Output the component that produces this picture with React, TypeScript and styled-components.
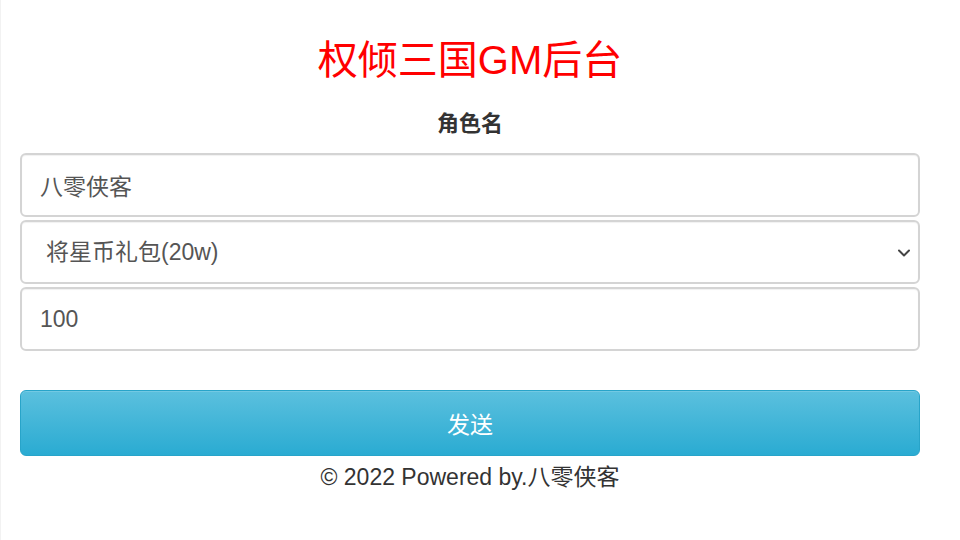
import React, { useState } from "react";
import styled, { createGlobalStyle } from "styled-components";

const GlobalStyle = createGlobalStyle`
    html, body {
        margin: 0;
        padding: 0;
        background: #fff;
    }
    body {
        font-family: "Liberation Sans", "Noto Sans CJK SC", sans-serif;
        color: #333;
        border-left: 1px solid #f2f2f2;
    }
`;

const Page = styled.div`
    display: flex;
    flex-direction: column;
    align-items: stretch;
    padding: 30px 40px 0 19px;
    height: 540px;
    box-sizing: border-box;
`;

const Title = styled.h1`
    margin: 0;
    text-align: center;
    color: #ff0000;
    font-size: 40px;
    font-weight: normal;
    line-height: 60px;
`;

const Label = styled.label`
    display: block;
    text-align: center;
    font-size: 22px;
    font-weight: bold;
    color: #333;
    line-height: 30px;
    margin: 19px 0 14px;
`;

const Fields = styled.div`
    display: flex;
    flex-direction: column;
    gap: 3px;
`;

const fieldCss = `
    display: block;
    width: 100%;
    height: 64px;
    box-sizing: border-box;
    border: 2px solid #d4d4d4;
    border-radius: 6px;
    background: #fff;
    font-family: "Liberation Sans", "Noto Sans CJK SC", sans-serif;
    font-size: 23px;
    color: #555;
    outline: none;
    box-shadow: inset 0 1px 1px rgba(0, 0, 0, 0.06);
`;

const TextInput = styled.input`
    ${fieldCss}
    padding: 0 18px;
`;

const SelectWrap = styled.div`
    position: relative;
`;

const Select = styled.select`
    ${fieldCss}
    padding: 0 40px 0 24px;
    appearance: none;
    -webkit-appearance: none;
`;

const Chevron = styled.svg`
    position: absolute;
    right: 9px;
    top: 50%;
    width: 14px;
    height: 14px;
    margin-top: -6px;
    pointer-events: none;
`;

const SendButton = styled.button`
    margin-top: 39px;
    height: 66px;
    width: 100%;
    border: 1px solid #28a4c9;
    border-radius: 6px;
    background: linear-gradient(to bottom, #5bc0de 0%, #2aabd2 100%);
    color: #fff;
    font-family: "Liberation Sans", "Noto Sans CJK SC", sans-serif;
    font-size: 23px;
    cursor: pointer;
    box-shadow: inset 0 1px 0 rgba(255, 255, 255, 0.15);
`;

const Footer = styled.p`
    margin: 4px 0 0;
    text-align: center;
    font-size: 23px;
    line-height: 34px;
    color: #333;
`;

const App = (): React.ReactElement => {
    const [name, setName] = useState("八零侠客");
    const [item, setItem] = useState("1");
    const [count, setCount] = useState("100");

    return (
        <>
            <GlobalStyle />
            <Page>
                <Title>权倾三国GM后台</Title>
                <Label>角色名</Label>
                <Fields>
                    <TextInput value={name} onChange={(e) => setName(e.target.value)} />
                    <SelectWrap>
                        <Select value={item} onChange={(e) => setItem(e.target.value)}>
                            <option value="1">将星币礼包(20w)</option>
                        </Select>
                        <Chevron viewBox="0 0 14 14">
                            <path d="M2 4.5 L7 9.5 L12 4.5" fill="none" stroke="#444" strokeWidth="2" strokeLinecap="round" strokeLinejoin="round" />
                        </Chevron>
                    </SelectWrap>
                    <TextInput value={count} onChange={(e) => setCount(e.target.value)} />
                </Fields>
                <SendButton>发送</SendButton>
                <Footer>© 2022 Powered by.八零侠客</Footer>
            </Page>
        </>
    );
};

export default App;
